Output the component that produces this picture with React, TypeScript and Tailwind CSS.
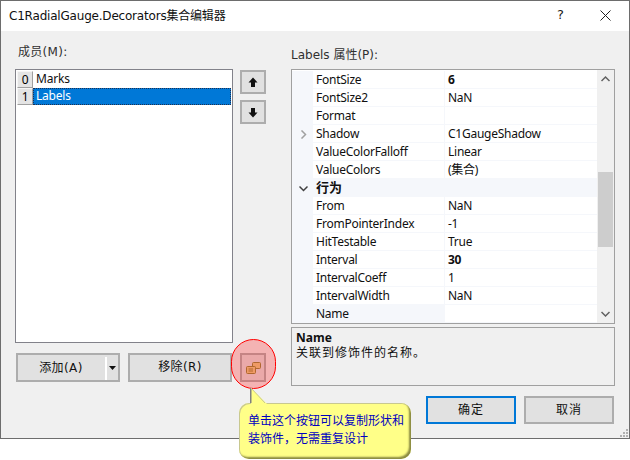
import React from "react";

const font = { fontFamily: '"DejaVu Sans","Noto Sans CJK SC",sans-serif' };
const noto = { fontFamily: '"Noto Sans","Noto Sans CJK SC",sans-serif' };

type Row = { n?: string; v?: string; bold?: boolean; cat?: boolean; sel?: boolean; exp?: boolean };
const rows: Row[] = [
  { n: "FontSize", v: "6", bold: true },
  { n: "FontSize2", v: "NaN" },
  { n: "Format", v: "" },
  { n: "Shadow", v: "C1GaugeShadow", exp: true },
  { n: "ValueColorFalloff", v: "Linear" },
  { n: "ValueColors", v: "(集合)" },
  { n: "行为", cat: true },
  { n: "From", v: "NaN" },
  { n: "FromPointerIndex", v: "-1" },
  { n: "HitTestable", v: "True" },
  { n: "Interval", v: "30", bold: true },
  { n: "IntervalCoeff", v: "1" },
  { n: "IntervalWidth", v: "NaN" },
  { n: "Name", v: "", sel: true },
];

function Chevron({ d, color = "#606060" }: { d: string; color?: string }) {
  return (
    <svg width="9" height="9" viewBox="0 0 9 9" fill="none">
      <path d={d} stroke={color} strokeWidth="1.5" />
    </svg>
  );
}

function GridRow({ r }: { r: Row }) {
  if (r.cat) {
    return (
      <div className="flex h-[18px] items-center bg-[#f5f7fb]">
        <div className="flex w-[21px] justify-center pl-[2px]">
          <Chevron d="M0.5 2.5 L4.5 6.5 L8.5 2.5" color="#404040" />
        </div>
        <span className="pl-[3px] font-bold text-[13px] text-[#101010]">{r.n}</span>
      </div>
    );
  }
  return (
    <div className="flex h-[18px] bg-[#f5f7fb]">
      <div className="flex w-[21px] items-center justify-center pl-[2px]">
        {r.exp && <Chevron d="M2.5 0.5 L6.5 4.5 L2.5 8.5" color="#a0a0a0" />}
      </div>
      <div
        className={`w-[131px] pl-[3px] leading-[18px] h-[17px] text-[12px] tracking-[-0.25px] text-[#101010] ${
          r.sel ? "bg-[#f5f7fb]" : "bg-white"
        }`}
      >
        {r.n}
      </div>
      <div
        className={`ml-[1px] flex-1 pl-[3px] leading-[18px] h-[17px] text-[12px] tracking-[-0.25px] text-[#101010] bg-white ${
          r.bold ? "font-bold" : ""
        }`}
      >
        {r.v}
      </div>
    </div>
  );
}

function Btn({ className = "", children }: { className?: string; children?: React.ReactNode }) {
  return (
    <div
      className={`flex items-center justify-center border-2 bg-[#e1e1e1] text-[12px] text-[#101010] ${className}`}
    >
      {children}
    </div>
  );
}

export default function App() {
  return (
    <div style={font} className="relative h-[460px] w-[630px] overflow-hidden bg-white">
      <div className="flex h-[439px] w-[630px] flex-col border border-[#6d6d6d] bg-[#f0f0f0]">
        <div className="flex h-[30px] shrink-0 items-center bg-white pl-[8px] pr-[18px]">
          <span className="text-[12px] tracking-[-0.2px] text-[#101010]">C1RadialGauge.Decorators集合编辑器</span>
          <span className="ml-auto mr-[36px] pb-[2px] text-[13px] text-[#202020]">?</span>
          <svg className="mb-[2px]" width="11" height="11" viewBox="0 0 11 11" fill="none">
            <path d="M0.5 0.5 L10.5 10.5 M10.5 0.5 L0.5 10.5" stroke="#202020" strokeWidth="1" />
          </svg>
        </div>

        <div className="relative flex flex-1 pl-[14px] pr-[14px]">
          <div className="flex w-[218px] shrink-0 flex-col">
            <div className="mt-[13px] h-[25px] pl-[3px] text-[12px] leading-[17px] tracking-[0.3px] text-[#303030]">成员(M):</div>
            <div style={noto} className="h-[274px] border border-[#82828a] bg-white p-[1px] text-[12px] tracking-[-0.2px]">
              <div className="flex h-[17px]">
                <div className="flex w-[16px] items-center justify-center border border-[#a0a0a0] border-t-[#f5f5f5] border-l-[#f5f5f5] bg-[#e4e4e4]">0</div>
                <div className="pl-[3px] leading-[15px] text-[#101010]">Marks</div>
              </div>
              <div className="flex h-[17px]">
                <div className="flex w-[16px] items-center justify-center border border-[#a0a0a0] border-t-[#f5f5f5] border-l-[#f5f5f5] bg-[#e4e4e4]">1</div>
                <div className="flex-1 border border-dotted border-[#203050] bg-[#0078d7] pl-[2px] leading-[13px] text-white">Labels</div>
              </div>
            </div>
            <div className="mt-[10px] flex gap-[8px] pl-[1px]">
              <Btn className="relative h-[29px] w-[104px] border-[#adadad]">
                <span className="mr-[14px] tracking-[0.4px]">添加(A)</span>
                <span className="absolute right-[11px] top-[2px] h-[23px] w-[2px] bg-white" />
                <svg className="absolute right-[2px] top-[11px]" width="7" height="4" viewBox="0 0 7 4">
                  <path d="M0 0 H7 L3.5 4 Z" fill="#101010" />
                </svg>
              </Btn>
              <Btn className="h-[29px] w-[104px] border-[#adadad] pb-[1px] tracking-[0.4px]">移除(R)</Btn>
            </div>
          </div>

          <div className="ml-[7px] flex w-[26px] shrink-0 flex-col">
            <Btn className="mt-[39px] h-[24px] w-[26px] border-[#adadad]">
              <svg width="10" height="11" viewBox="0 0 10 11">
                <path d="M5 0.5 L9.5 5.5 H7 V10 H3 V5.5 H0.5 Z" fill="#101010" />
              </svg>
            </Btn>
            <Btn className="mt-[6px] h-[24px] w-[26px] border-[#adadad]">
              <svg width="10" height="11" viewBox="0 0 10 11">
                <path d="M5 10.5 L9.5 5.5 H7 V1 H3 V5.5 H0.5 Z" fill="#101010" />
              </svg>
            </Btn>
            <Btn className="mt-[229px] h-[29px] w-[26px] border-[#adadad]">
              <svg width="15" height="12" viewBox="0 0 15 12">
                <rect x="6.5" y="0.5" width="8" height="6" rx="1" fill="#e8cc80" stroke="#8f8333" />
                <rect x="0.5" y="4.5" width="9" height="7" rx="1" fill="#e8cc80" stroke="#8f8333" />
                <path d="M2.5 7 H7 M2.5 9 H7" stroke="#8f8333" strokeWidth="1" />
              </svg>
            </Btn>
          </div>

          <div className="ml-[25px] flex flex-1 flex-col">
            <div className="mt-[16px] h-[22px] text-[12px] leading-[17px] text-[#303030]">Labels 属性(P):</div>
            <div style={noto} className="flex h-[255px] border border-[#a0a0a0] bg-white">
              <div className="flex w-[305px] flex-col overflow-hidden pt-[1px]">
                {rows.map((r) => (
                  <GridRow key={r.n} r={r} />
                ))}
              </div>
              <div className="flex flex-1 flex-col items-center bg-[#f0f0f0] pt-[5px]">
                <Chevron d="M0.5 6 L4.5 2 L8.5 6" />
                <div className="mt-[88px] h-[75px] w-[15px] bg-[#cdcdcd]" />
                <div className="mt-[62px]">
                  <Chevron d="M0.5 3 L4.5 7 L8.5 3" />
                </div>
              </div>
            </div>
            <div style={noto} className="mt-[3px] h-[59px] border border-[#a0a0a0] pl-[4px] pt-[2px] text-[12px] leading-[15px] text-[#101010]">
              <div className="font-bold">Name</div>
              <div className="tracking-[1px]">关联到修饰件的名称。</div>
            </div>
            <div className="mt-[10px] flex justify-end gap-[8px] pr-[1px]">
              <Btn className="h-[28px] w-[90px] border-[#0078d7] tracking-[1px]">确定</Btn>
              <Btn className="h-[28px] w-[90px] border-[#adadad] tracking-[1px]">取消</Btn>
            </div>
          </div>

          <svg className="absolute bottom-[1px] right-[1px]" width="8" height="8" viewBox="0 0 8 8" fill="#b0b0b0">
            <rect x="6" y="0" width="2" height="2" />
            <rect x="3" y="3" width="2" height="2" />
            <rect x="6" y="3" width="2" height="2" />
            <rect x="0" y="6" width="2" height="2" />
            <rect x="3" y="6" width="2" height="2" />
            <rect x="6" y="6" width="2" height="2" />
          </svg>
        </div>
      </div>

      {/* highlight circle */}
      <div className="absolute left-[231px] top-[339px] h-[50px] w-[45px] rounded-full border border-[#ff0000] bg-[#ff2828]/30" />

      {/* callout */}
      <div className="absolute left-[239px] top-[403px] flex h-[56px] w-[172px] items-center rounded-[10px] bg-[#ffff88] pb-[3px] pl-[9px] text-[12px] leading-[18px] text-[#0000c0] shadow-[inset_-2px_-2px_2px_#8a8a40,inset_1px_1px_0_#c8c890]">
        <div>
          单击这个按钮可以复制形状和
          <br />
          装饰件，无需重复设计
        </div>
      </div>
      <svg className="absolute left-[250px] top-[388px]" width="19" height="17" viewBox="0 0 19 17">
        <path d="M1 0 V17 H18 Z" fill="#ffff88" />
        <path d="M0.75 0 V15" stroke="#808080" strokeWidth="1.5" fill="none" />
        <path d="M1 0 L15 15" stroke="#c8c890" strokeWidth="1" fill="none" />
      </svg>
    </div>
  );
}
